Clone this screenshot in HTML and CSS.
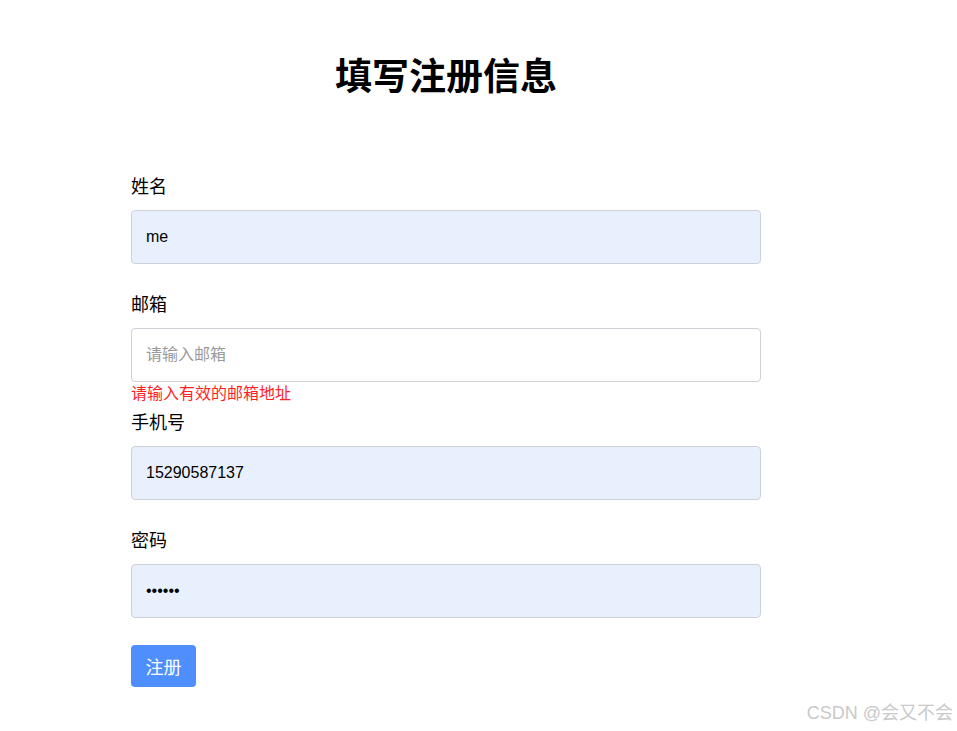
FILE: index.html
```html
<!DOCTYPE html>
<html lang="zh-CN">
<head>
<meta charset="utf-8">
<title>填写注册信息</title>
<link rel="stylesheet" href="styles.css">
</head>
<body>
<div class="container">
  <h1 class="title">填写注册信息</h1>
  <form class="form">
    <div class="group">
      <label class="label">姓名</label>
      <input class="input filled" type="text" value="me">
      <div class="error"></div>
    </div>
    <div class="group">
      <label class="label">邮箱</label>
      <input class="input" type="text" placeholder="请输入邮箱">
      <div class="error">请输入有效的邮箱地址</div>
    </div>
    <div class="group">
      <label class="label">手机号</label>
      <input class="input filled" type="text" value="15290587137">
      <div class="error"></div>
    </div>
    <div class="group">
      <label class="label">密码</label>
      <input class="input filled" type="password" value="123456">
      <div class="error"></div>
    </div>
    <button class="btn" type="button">注册</button>
  </form>
</div>
<div class="watermark">CSDN @会又不会</div>
</body>
</html>
```
FILE: styles.css
```css
html, body {
  margin: 0;
  padding: 0;
  background: #fff;
  font-family: "Liberation Sans", "Noto Sans CJK SC", sans-serif;
  color: #000;
}
.container {
  width: 630px;
  margin-left: 131px;
  padding-top: 47px;
}
.title {
  margin: 0 0 71px 0;
  text-align: center;
  font-size: 37px;
  line-height: 54px;
  font-weight: bold;
  font-family: "Noto Sans CJK SC", sans-serif;
}
.form {
  display: flex;
  flex-direction: column;
}
.group {
  display: flex;
  flex-direction: column;
}
.label {
  font-size: 18px;
  line-height: 27px;
  margin-bottom: 11px;
  font-family: "Noto Sans CJK SC", sans-serif;
}
.input {
  box-sizing: border-box;
  width: 630px;
  height: 54px;
  margin: 0;
  padding: 0 14px;
  border: 1px solid #cdd2d9;
  border-radius: 4px;
  background: #fff;
  font-size: 16px;
  font-family: "Liberation Sans", "Noto Sans CJK SC", sans-serif;
  color: #000;
  outline: none;
}
.input::placeholder {
  color: #9a9a9a;
  font-family: "Noto Sans CJK SC", sans-serif;
}
.input.filled {
  background: #e8f0fe;
}
.error {
  height: 26px;
  font-size: 16px;
  line-height: 21px;
  color: #ff1f1f;
  font-family: "Noto Sans CJK SC", sans-serif;
}
.btn {
  align-self: flex-start;
  box-sizing: border-box;
  height: 42px;
  padding: 0 14.5px;
  margin-top: 1px;
  border: none;
  border-radius: 4px;
  background: #4e8ffd;
  color: #fff;
  font-size: 18px;
  font-family: "Noto Sans CJK SC", sans-serif;
  cursor: pointer;
}
.watermark {
  position: absolute;
  right: 4px;
  bottom: 6px;
  font-size: 18px;
  line-height: 24px;
  color: #c9c9c9;
  font-family: "Liberation Sans", "Noto Sans CJK SC", sans-serif;
}
```
